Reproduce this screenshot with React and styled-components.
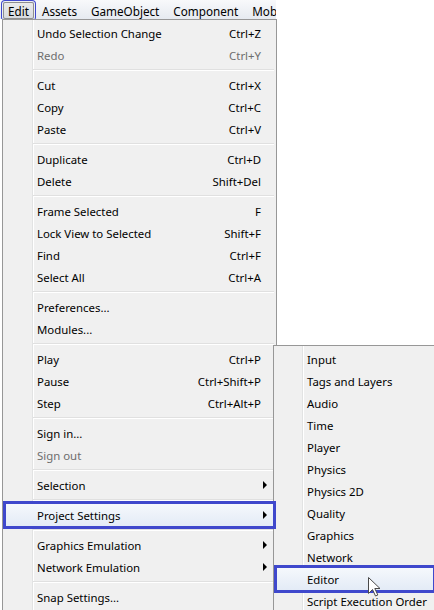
import React from "react";
import styled, { createGlobalStyle, css } from "styled-components";

const Global = createGlobalStyle`
  html, body {
    margin: 0;
    padding: 0;
    background: #fff;
  }
  body {
    font-family: "Segoe UI", "Noto Sans", "Liberation Sans", sans-serif;
    font-size: 11.4px;
    color: #000;
  }
`;

const Screen = styled.div`
  position: relative;
  width: 434px;
  height: 610px;
  overflow: hidden;
`;

const MenuBar = styled.div`
  display: flex;
  align-items: center;
  gap: 2px;
  box-sizing: border-box;
  width: 276px;
  height: 19px;
  padding: 1px 0 0 3px;
  background: linear-gradient(#f8f9fb, #e6eaf0);
  overflow: hidden;
  white-space: nowrap;
  font-size: 11.7px;
`;

const BarItem = styled.div`
  flex: none;
  height: 17px;
  line-height: 16px;
  padding: 0 5px;
  box-sizing: border-box;
  border: 1px solid transparent;
  ${(p) =>
    p.$open &&
    css`
      padding: 0 4px;
      border-color: #8e8f8f;
      border-radius: 2px;
      background: linear-gradient(#e9eaeb, #d8dbe0);
      box-shadow: 0 0 0 1px #eef0f3, 0 0 0 2px #3f48cc;
    `}
`;

const DropArea = styled.div`
  position: relative;
`;

const gutter = (x) => css`
  background:
    linear-gradient(
      to right,
      transparent ${x}px,
      #e2e3e3 ${x}px,
      #e2e3e3 ${x + 1}px,
      #fff ${x + 1}px,
      #fff ${x + 2}px,
      transparent ${x + 2}px
    ),
    #f0f0f0;
`;

const Menu = styled.div`
  margin-left: 2px;
  padding: 2px;
  box-sizing: border-box;
  width: 275px;
  border: 1px solid #979797;
  ${gutter(29)}
`;

const SubMenu = styled.div`
  position: absolute;
  left: 273px;
  top: 326px;
  width: 170px;
  padding: 2px;
  border: 1px solid #979797;
  ${gutter(28)}
`;

const Item = styled.div`
  display: flex;
  align-items: center;
  height: 22px;
  padding: 0 13px 0 ${(p) => (p.$sub ? 31 : 32)}px;
  color: ${(p) => (p.$disabled ? "#6d6d6d" : "#000")};
  white-space: nowrap;
  ${(p) =>
    p.$hot &&
    css`
      margin: 0 1px;
      padding-left: ${p.$sub ? 30 : 31}px;
      padding-right: 12px;
      background: linear-gradient(#f5f8fc, #e3ebf6);
      outline: 3px solid #3f48cc;
      box-shadow: 0 -4px 0 -1px #f0f0f0;
      position: relative;
      z-index: 1;
    `}
  ${(p) =>
    p.$sub &&
    p.$hot &&
    css`
      margin-right: 13px;
    `}
`;

const Label = styled.span`
  flex: 1;
`;

const Shortcut = styled.span`
  flex: none;
`;

const Arrow = styled.span`
  flex: none;
  width: 0;
  height: 0;
  margin-right: -6px;
  border-top: 4px solid transparent;
  border-bottom: 4px solid transparent;
  border-left: 4px solid #000;
`;

const Separator = styled.div`
  height: 8px;
  display: flex;
  align-items: center;
  padding-left: 28px;
  &::after {
    content: "";
    flex: 1;
    height: 1px;
    border-top: 1px solid #e0e0e0;
    background: #fff;
  }
`;

const Cursor = styled.svg`
  position: absolute;
  left: 368px;
  top: 558px;
  z-index: 2;
`;

const mainItems = [
  ["Undo Selection Change", "Ctrl+Z"],
  ["Redo", "Ctrl+Y", { disabled: true }],
  "-",
  ["Cut", "Ctrl+X"],
  ["Copy", "Ctrl+C"],
  ["Paste", "Ctrl+V"],
  "-",
  ["Duplicate", "Ctrl+D"],
  ["Delete", "Shift+Del"],
  "-",
  ["Frame Selected", "F"],
  ["Lock View to Selected", "Shift+F"],
  ["Find", "Ctrl+F"],
  ["Select All", "Ctrl+A"],
  "-",
  ["Preferences..."],
  ["Modules..."],
  "-",
  ["Play", "Ctrl+P"],
  ["Pause", "Ctrl+Shift+P"],
  ["Step", "Ctrl+Alt+P"],
  "-",
  ["Sign in..."],
  ["Sign out", null, { disabled: true }],
  "-",
  ["Selection", null, { arrow: true }],
  "-",
  ["Project Settings", null, { arrow: true, hot: true }],
  "-",
  ["Graphics Emulation", null, { arrow: true }],
  ["Network Emulation", null, { arrow: true }],
  "-",
  ["Snap Settings..."],
];

const subItems = [
  "Input",
  "Tags and Layers",
  "Audio",
  "Time",
  "Player",
  "Physics",
  "Physics 2D",
  "Quality",
  "Graphics",
  "Network",
  "Editor",
  "Script Execution Order",
];

export default function App() {
  return (
    <Screen>
      <Global />
      <MenuBar>
        <BarItem $open>Edit</BarItem>
        <BarItem>Assets</BarItem>
        <BarItem>GameObject</BarItem>
        <BarItem>Component</BarItem>
        <BarItem>Mobile</BarItem>
      </MenuBar>
      <DropArea>
        <Menu>
          {mainItems.map((it, i) => {
            if (it === "-") return <Separator key={i} />;
            const [label, key, opt = {}] = it;
            return (
              <Item key={i} $disabled={opt.disabled} $hot={opt.hot}>
                <Label>{label}</Label>
                {key && <Shortcut>{key}</Shortcut>}
                {opt.arrow && <Arrow />}
              </Item>
            );
          })}
        </Menu>
        <SubMenu>
          {subItems.map((label) => (
            <Item key={label} $sub $hot={label === "Editor"}>
              <Label>{label}</Label>
            </Item>
          ))}
        </SubMenu>
        <Cursor width="14" height="21" viewBox="0 0 14 21">
          <path
            d="M0.5 0.5 L0.5 16.5 L4.5 12.5 L7.5 19 L9.8 18 L6.8 11.5 L12 11.5 Z"
            fill="#fff"
            stroke="#4a4a4a"
            strokeWidth="1"
            strokeLinejoin="round"
          />
        </Cursor>
      </DropArea>
    </Screen>
  );
}
